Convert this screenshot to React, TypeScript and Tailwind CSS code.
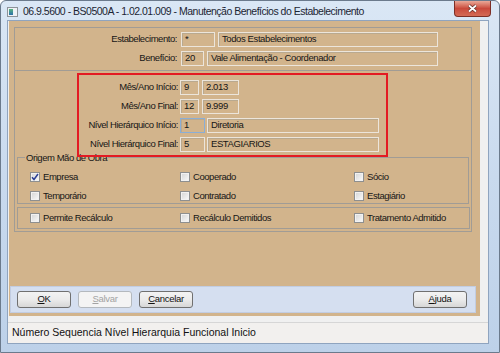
import type { ReactNode } from "react";

function Field({ className, text, focused }: { className: string; text?: string; focused?: boolean }) {
  return (
    <div
      className={`flex h-[15px] items-center overflow-hidden whitespace-nowrap border pl-[3px] text-[9.5px] tracking-[-0.4px] text-[#161616] shadow-[inset_1px_1px_0_#b9a98f] ${
        focused ? "border-[#8aaed6]" : "border-[#ece5db]"
      } ${className}`}
    >
      {text}
    </div>
  );
}

function Row({ label, labelClass, children }: { label: string; labelClass: string; children: ReactNode }) {
  return (
    <div className="flex h-[15px] items-center">
      <span className={`shrink-0 text-right text-[9.5px] tracking-[-0.45px] text-[#161616] ${labelClass}`}>{label}</span>
      {children}
    </div>
  );
}

function Check({ label, checked }: { label: string; checked?: boolean }) {
  return (
    <div className="flex h-[12px] items-center gap-[3px]">
      <span className="flex h-[10px] w-[10px] shrink-0 items-center justify-center border border-[#8e8f8f] bg-gradient-to-br from-[#d4d4d4] to-[#fbfbfb] shadow-[inset_0_0_0_1px_#f2f2f2]">
        {checked && (
          <svg width="8" height="8" viewBox="0 0 8 8">
            <path d="M1 4.2 L3 6.5 L7 1" fill="none" stroke="#2b3f95" strokeWidth="1.5" />
          </svg>
        )}
      </span>
      <span className="text-[9.5px] tracking-[-0.45px] text-[#161616]">{label}</span>
    </div>
  );
}

function Btn({ children, disabled }: { children: ReactNode; disabled?: boolean }) {
  return (
    <button
      className={`flex h-[17px] w-[54px] items-center justify-center rounded-[3px] border text-[9.5px] tracking-[-0.3px] ${
        disabled
          ? "border-[#b4b9be] bg-[#f4f4f4] text-[#a3a3a3]"
          : "border-[#707070] bg-gradient-to-b from-[#f3f3f3] via-[#ebebeb] to-[#d7d7d7] text-[#111]"
      }`}
    >
      {children}
    </button>
  );
}

export default function App() {
  return (
    <div className="h-[353px] w-[500px] overflow-hidden bg-white font-['Liberation_Sans',Arial,sans-serif]">
      <div className="flex h-full flex-col rounded-t-[6px] border border-[#6b7a8c] bg-gradient-to-b from-[#dae7f5] via-[#c9daee] to-[#bdd1e9]">
        {/* barra de título */}
        <div className="flex h-[19px] shrink-0">
          <div className="ml-[6px] flex items-center gap-[5px] pt-[2px]">
            <span className="flex h-[10px] w-[11px] items-center border border-[#8d9399] bg-[#eef2f6] pl-[1px]">
              <span className="h-[6px] w-[4px] bg-gradient-to-b from-[#5bb37a] to-[#2f6fa8]" />
            </span>
            <span className="text-[10.5px] tracking-[-0.5px] text-[#1c2533]">
              06.9.5600 - BS0500A - 1.02.01.009 - Manutenção Benefícios do Estabelecimento
            </span>
          </div>
          <div className="ml-auto mr-[8px] flex h-[16px] w-[37px] items-center justify-center rounded-b-[4px] border border-t-0 border-[#7d2f26] bg-gradient-to-b from-[#e9a898] via-[#c9493b] to-[#d46a55]">
            <svg width="11" height="9" viewBox="0 0 11 9">
              <path d="M2 1.5 L9 7.5 M9 1.5 L2 7.5" stroke="#5a2a24" strokeWidth="3.2" />
              <path d="M2 1.5 L9 7.5 M9 1.5 L2 7.5" stroke="#ffffff" strokeWidth="1.8" />
            </svg>
          </div>
        </div>

        {/* área cliente */}
        <div className="ml-[6px] flex h-[324px] w-[482px] flex-col border border-[#8fa4bf] bg-[#f0f0f0]">
          <div className="ml-[1px] flex h-[295px] w-[471px] flex-col bg-[#d2b48c]">
            <div className="ml-[5px] mt-[6px] flex w-[458px] flex-col border border-[#a19c95]">
              {/* estabelecimento / benefício */}
              <div className="flex flex-col gap-[4px] border-b border-[#a19c95] pb-[4px] pt-[4px]">
                <Row label="Estabelecimento:" labelClass="w-[162px] mr-[4px]">
                  <Field className="w-[34px]" text="*" />
                  <Field className="ml-[3px] w-[220px]" text="Todos Estabelecimentos" />
                </Row>
                <Row label="Benefício:" labelClass="w-[162px] mr-[4px]">
                  <Field className="w-[23px]" text="20" />
                  <Field className="ml-[3px] w-[231px]" text="Vale Alimentação - Coordenador" />
                </Row>
              </div>

              <div className="flex flex-col pb-[2px]">
                {/* destaque */}
                <div className="relative z-10 ml-[62px] mt-[2px] flex h-[84px] w-[311px] flex-col gap-[4px] border-2 border-[#e31b23] pt-[5px]">
                  <Row label="Mês/Ano Início:" labelClass="w-[99px] mr-[2px]">
                    <Field className="w-[19px]" text="9" />
                    <Field className="ml-[3px] w-[37px]" text="2.013" />
                  </Row>
                  <Row label="Mês/Ano Final:" labelClass="w-[99px] mr-[2px]">
                    <Field className="w-[19px]" text="12" />
                    <Field className="ml-[3px] w-[37px]" text="9.999" />
                  </Row>
                  <Row label="Nível Hierárquico Início:" labelClass="w-[99px] mr-[2px]">
                    <Field className="w-[25px]" text="1" focused />
                    <Field className="ml-[2px] w-[172px]" text="Diretoria" />
                  </Row>
                  <Row label="Nível Hierárquico Final:" labelClass="w-[99px] mr-[2px]">
                    <Field className="w-[25px]" text="5" />
                    <Field className="ml-[2px] w-[172px]" text="ESTAGIARIOS" />
                  </Row>
                </div>

                {/* origem mão de obra */}
                <fieldset className="-mt-[5px] ml-[2px] w-[452px] border border-[#a19c95] pb-[1px] pt-[8px]">
                  <legend className="ml-[7px] px-[1px] text-[9.5px] leading-[11px] tracking-[-0.45px] text-[#161616]">
                    Origem Mão de Obra
                  </legend>
                  <div className="grid grid-cols-[150px_174px_1fr] gap-y-[7px] pl-[12px]">
                    <Check label="Empresa" checked />
                    <Check label="Cooperado" />
                    <Check label="Sócio" />
                    <Check label="Temporário" />
                    <Check label="Contratado" />
                    <Check label="Estagiário" />
                  </div>
                </fieldset>

                <div className="ml-[2px] mt-[3px] grid h-[22px] w-[453px] grid-cols-[150px_174px_1fr] border border-[#a19c95] pl-[12px] pt-[4px]">
                  <Check label="Permite Recálculo" />
                  <Check label="Recálculo Demitidos" />
                  <Check label="Tratamento Admitido" />
                </div>
              </div>
            </div>

            {/* botões */}
            <div className="mb-[3px] ml-[1px] mt-auto flex h-[27px] w-[466px] items-center border border-[#c2cde2] bg-[#d5dff0] pl-[6px] pr-[8px]">
              <div className="flex gap-[7px]">
                <Btn>
                  <u>O</u>K
                </Btn>
                <Btn disabled>
                  <u>S</u>alvar
                </Btn>
                <Btn>
                  <u>C</u>ancelar
                </Btn>
              </div>
              <div className="ml-auto">
                <Btn>
                  <u>A</u>juda
                </Btn>
              </div>
            </div>
          </div>

          {/* barra de status */}
          <div className="mt-auto flex h-[21px] items-center border-t border-[#d6d6d6] bg-[#f2f0ee] pl-[4px] text-[10.5px] text-[#111]">
            Número Sequencia Nível Hierarquia Funcional Inicio
          </div>
        </div>
      </div>
    </div>
  );
}
